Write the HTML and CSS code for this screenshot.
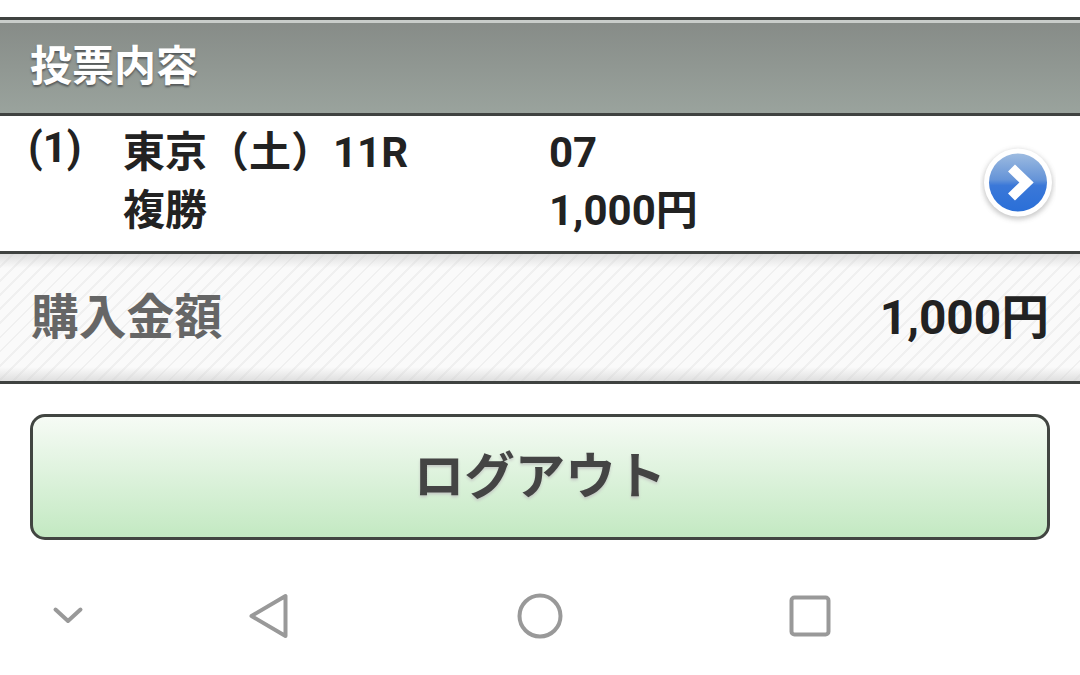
FILE: index.html
```html
<!DOCTYPE html>
<html lang="ja">
<head>
<meta charset="utf-8">
<title>投票内容</title>
<link rel="stylesheet" href="styles.css">
</head>
<body>
<main class="page">
  <h2 class="section-head">投票内容</h2>
  <section class="bet">
    <div class="bet-no">(1)</div>
    <div class="bet-info">
      <div class="bet-col bet-race"><span>東京（土）11R</span><span>複勝</span></div>
      <div class="bet-col bet-amount"><span>07</span><span>1,000円</span></div>
    </div>
    <svg class="go" width="76" height="80" viewBox="0 0 76 80" aria-hidden="true">
      <defs>
        <linearGradient id="blue" x1="0" y1="0" x2="0" y2="1">
          <stop offset="0" stop-color="#9dbbe0"/>
          <stop offset="0.45" stop-color="#6594d8"/>
          <stop offset="0.55" stop-color="#3b78d8"/>
          <stop offset="1" stop-color="#2a6fd8"/>
        </linearGradient>
        <filter id="soft" x="-30%" y="-30%" width="160%" height="160%">
          <feGaussianBlur stdDeviation="2.5"/>
        </filter>
      </defs>
      <circle cx="38" cy="39.5" r="35" fill="#888" opacity="0.45" filter="url(#soft)"/>
      <circle cx="38" cy="37.5" r="34" fill="#fff"/>
      <circle cx="38" cy="37.5" r="29" fill="url(#blue)"/>
      <path d="M31.5 23 L46.5 37.5 L31.5 52" fill="none" stroke="#fff" stroke-width="10"/>
    </svg>
  </section>
  <section class="total">
    <span class="total-label">購入金額</span>
    <span class="total-value">1,000円</span>
  </section>
  <div class="action">
    <button class="logout" type="button">ログアウト</button>
  </div>
  <nav class="navbar">
    <svg class="nav-icon" width="60" height="60" viewBox="0 0 60 60" aria-hidden="true"><path d="M17.5 23.5 L30 35 L42.5 23.5" class="stroke"/></svg>
    <svg class="nav-icon" width="60" height="60" viewBox="0 0 60 60" aria-hidden="true"><path d="M11.5 30 L45.5 10 V50 Z" class="stroke"/></svg>
    <svg class="nav-icon" width="60" height="60" viewBox="0 0 60 60" aria-hidden="true"><circle cx="30" cy="30" r="20.5" class="stroke"/></svg>
    <svg class="nav-icon" width="60" height="60" viewBox="0 0 60 60" aria-hidden="true"><rect x="11.5" y="11.5" width="37" height="37" rx="3" class="stroke"/></svg>
  </nav>
</main>
</body>
</html>
```
FILE: styles.css
```css
* { box-sizing: border-box; margin: 0; padding: 0; }
html, body { width: 1080px; height: 675px; overflow: hidden; background: #fff; }
body { font-family: Roboto, "Noto Sans CJK JP", sans-serif; font-weight: 700; color: #222; }
.page { padding-top: 17px; }

.section-head {
  height: 99px;
  border-top: 3px solid #3f4240;
  border-bottom: 3px solid #3f4240;
  box-shadow: inset 0 3px 0 #c9cdca;
  background: linear-gradient(#868b87, #9aa39d);
  padding: 1px 30px 0;
  display: flex;
  align-items: center;
  font-size: 42px;
  line-height: 1;
  color: #fff;
  text-shadow: 0 2px 2px #55595a;
}

.bet {
  height: 135px;
  display: flex;
  position: relative;
  font-size: 42px;
  line-height: 58px;
  padding-top: 8px;
}
.bet-no { width: 123px; padding-left: 28px; margin-top: -5px; }
.bet-info { display: flex; }
.bet-col { display: flex; flex-direction: column; }
.bet-race { width: 426px; }
.go { position: absolute; left: 979.5px; top: 28.5px; }

.total {
  height: 133px;
  border-top: 3px solid #3f4240;
  border-bottom: 3px solid #3f4240;
  padding: 3px 31px 0;
  display: flex;
  justify-content: space-between;
  align-items: center;
  line-height: 1;
  background:
    linear-gradient(rgba(205,205,205,.6), rgba(255,255,255,0) 14px, rgba(255,255,255,0) calc(100% - 14px), rgba(205,205,205,.6)),
    repeating-linear-gradient(135deg, #fafafa 0 8px, #f0f0f0 8px 10px);
}
.total-label { font-size: 47.8px; color: #666; }
.total-value { font-size: 47.8px; color: #222; }

.action { padding: 30px 30px 0; }
.logout {
  display: block;
  width: 100%;
  height: 126px;
  border: 3px solid #414541;
  border-radius: 15px;
  background: linear-gradient(#f6fbf5, #c3e9c2);
  font: inherit;
  font-size: 50.5px;
  line-height: 1;
  color: #444;
  text-shadow: 0 2px 3px #c4c8c4;
  cursor: pointer;
}

.navbar { position: relative; height: 135px; }
.nav-icon { position: absolute; top: 46px; }
.nav-icon:nth-child(1) { left: 38px; }
.nav-icon:nth-child(2) { left: 240px; }
.nav-icon:nth-child(3) { left: 510px; }
.nav-icon:nth-child(4) { left: 780px; }
.stroke { fill: none; stroke: #999; stroke-width: 4; stroke-linejoin: round; stroke-linecap: round; }
```
